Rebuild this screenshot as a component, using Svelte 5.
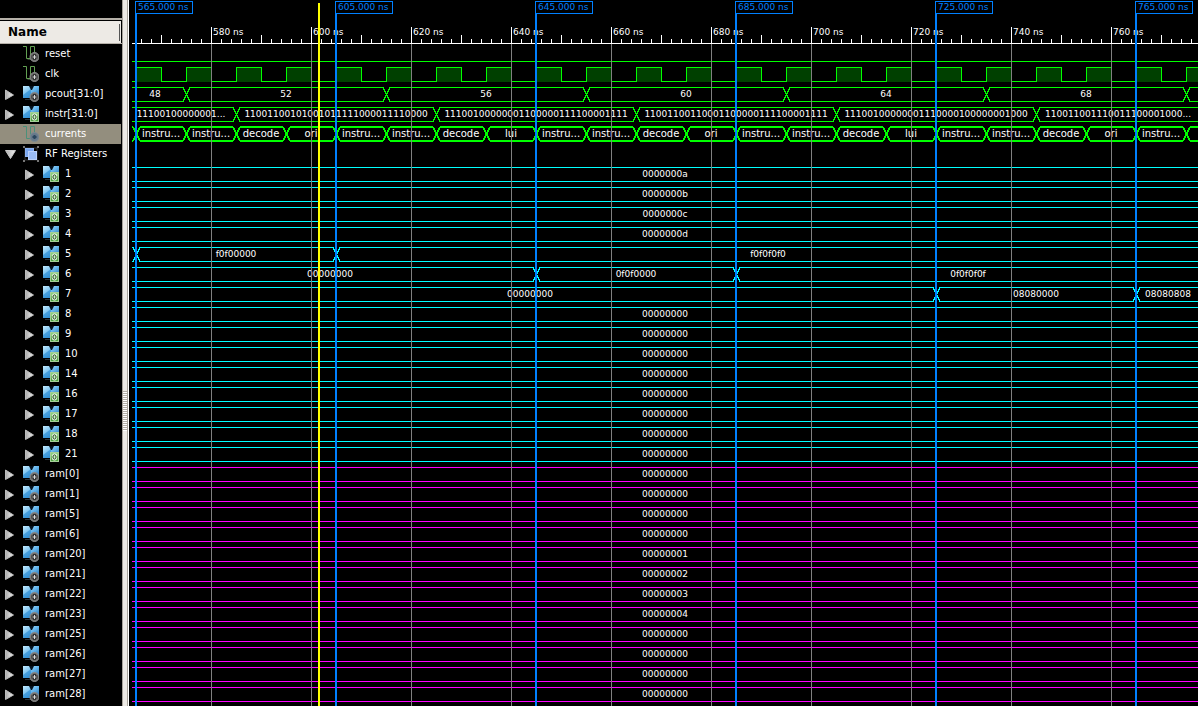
<script>
  const T0 = 565;
  const T_END = 780;
  const PX_PER_NS = 5;
  const ROW = 20;
  const HEAD = 44;
  const FAR = 4000;
  const x = (t) => (t - T0) * PX_PER_NS + 4;

  const GREEN = '#00ff00';
  const CYAN = '#00ffff';
  const MAGENTA = '#ff00ff';

  const states = [];
  for (let t = 565, i = 0; t < 775; t += 10, i++) {
    const step = i % 4;
    const last = Math.floor(i / 4) % 2 === 0 ? 'ori' : 'lui';
    states.push({ x: x(t + 5), label: step < 2 ? 'instru...' : step === 2 ? 'decode' : last });
  }

  const bus = (label, cuts, values, extra = {}) => ({
    label, kind: 'bus', icon: 'bus', badge: 'out', color: GREEN, expandable: true,
    cuts, values: values.map(([vx, text]) => ({ x: vx, label: text })), ...extra
  });

  const registers = [1, 2, 3, 4, 5, 6, 7, 8, 9, 10, 14, 16, 17, 18, 21];
  const constants = { 1: '0000000a', 2: '0000000b', 3: '0000000c', 4: '0000000d' };
  const changing = {
    5: [[565, 605], [[104, 'f0f00000'], [636, 'f0f0f0f0']]],
    6: [[645, 685], [[198, '00000000'], [504, '0f0f0000'], [836, '0f0f0f0f']]],
    7: [[725, 765], [[398, '00000000'], [904, '08080000'], [1036, '08080808']]]
  };
  const ram = [
    [0, 0], [1, 0], [5, 0], [6, 0], [20, 1], [21, 2],
    [22, 3], [23, 4], [25, 0], [26, 0], [27, 0], [28, 0]
  ];

  const top = [
    { label: 'reset', kind: 'low', icon: 'wire', badge: 'in', color: GREEN },
    { label: 'clk', kind: 'clock', icon: 'wire', badge: 'in', color: GREEN },
    bus('pcout[31:0]', [575, 615, 655, 695, 735, 775],
      [[23, '48'], [154, '52'], [354, '56'], [554, '60'], [754, '64'], [954, '68']],
      { badge: 'in' }),
    bus('instr[31:0]', [585, 625, 665, 705, 745], [
      [49, '11100100000001...'],
      [204, '11001100101001011111000011110000'],
      [404, '11100100000001100000111100001111'],
      [604, '11001100110001100000111100001111'],
      [804, '11100100000001110000100000001000'],
      [986, '110011001110011100001000...']
    ]),
    {
      label: 'currents', kind: 'bus', icon: 'wire', badge: 'in', color: GREEN, selected: true,
      thick: true, cuts: Array.from({ length: 22 }, (_, i) => 565 + i * 10), values: states
    }
  ];
  const regRows = registers.map((r) =>
    changing[r]
      ? bus(String(r), changing[r][0], changing[r][1], { color: CYAN, level: 1 })
      : bus(String(r), [], [], { color: CYAN, level: 1, constant: constants[r] ?? '00000000' })
  );
  const ramRows = ram.map(([n, v]) =>
    bus(`ram[${n}]`, [], [], { color: MAGENTA, badge: 'in', constant: String(v).padStart(8, '0') })
  );

  let open = $state(true);
  let rows = $derived([
    ...top,
    { label: 'RF Registers', kind: 'group', icon: 'group', expandable: true, group: true },
    ...(open ? regRows : []),
    ...ramRows
  ]);

  const cursors = [565, 605, 645, 685, 725, 765];
  const ticks = [];
  for (let t = 566; t < T_END; t += 2) ticks.push(t);
  const grid = ticks.filter((t) => t % 20 === 0);
  const tickTop = (t) => (t % 20 === 0 ? 27 : t % 10 === 0 ? 35 : 39);

  function busPath(row, y) {
    const h = row.thick ? 0 : 0.5;
    const a = y + 3 + h;
    const b = y + 17 + h;
    const s = 3.5;
    let d = '';
    let from = 0;
    for (const t of row.cuts) {
      const c = x(t) + 0.5;
      if (c - s > from) d += `M${from} ${a}H${c - s}M${from} ${b}H${c - s}`;
      d += `M${c - s} ${a}L${c + s} ${b}M${c - s} ${b}L${c + s} ${a}`;
      from = c + s;
    }
    return d + `M${from} ${a}H${FAR}M${from} ${b}H${FAR}`;
  }

  function clockPath(y) {
    let d = `M0 ${y + 17.5}`;
    for (let t = 565; t < T_END; t += 10) {
      d += `H${x(t) + 0.5}V${y + 3.5}H${x(t + 5) + 0.5}V${y + 17.5}`;
    }
    return d + `H${FAR}`;
  }
</script>

{#snippet badge(kind)}
  {#if kind === 'out'}
    <rect x="7.5" y="6.5" width="8" height="9" fill="#4fa53f" stroke="#a5cf9a" />
    <rect x="8" y="7" width="7" height="3" fill="#8ccf7d" />
    <ellipse cx="11.5" cy="11" rx="1.6" ry="2.2" fill="#8ccf7d" stroke="#fff" stroke-width="2.400" />
    <ellipse cx="11.5" cy="11" rx="1.6" ry="2.2" fill="#cdeec4" stroke="#1b4a14" />
  {:else}
    <circle cx="11.5" cy="11" r="4.5" fill="#6c6c6c" stroke="#8c8c8c" />
    <path d="M11.5 8v6M8.500 11h6" stroke="#333" stroke-width="3" />
    <path d="M11.5 9v4M9.5 11h4" stroke="#d8d8d8" />
  {/if}
{/snippet}

{#snippet icon(row)}
  <svg class="icon" width="16" height="16" viewBox="0 0 16 16" aria-hidden="true">
    {#if row.icon === 'wire'}
      <path d="M0 .5H3.5V12.5H7.5V.5H11.5V8" fill="none" stroke={row.selected ? '#4b907a' : '#62a052'} />
      {#if row.selected}
        <circle cx="11.5" cy="11" r="4.5" fill="#66798a" stroke="#7b8a94" />
        <path d="M11.5 9v4M9.5 11h4" stroke="#29465e" stroke-width="2" />
      {:else}
        <path d="M4.5 13.5H8.5" stroke="#30402c" />
        {@render badge(row.badge)}
      {/if}
    {:else if row.icon === 'bus'}
      <rect width="16" height="12" fill="url(#sky)" />
      <path d="M0 9L8 3V12H0Z" fill="#2689d2" opacity=".6" />
      <path d="M6 0H11L9 4H8Z" fill="#04101c" />
      <path d="M2 13.500H8" stroke="#26313a" />
      {@render badge(row.badge)}
    {:else}
      <path d="M2 2H14V14H2Z" fill="none" stroke="#333" />
      <path d="M0 0h2v2H0zM14 0h2v2h-2zM0 14h2v2H0zM14 14h2v2h-2z" fill="#777" />
      <rect x="2.5" y="2.5" width="8" height="8" fill="#79a5ee" stroke="#8db4f4" />
      <rect x="5.5" y="5.5" width="8" height="8" fill="#9abcf6" stroke="#b9d1fc" />
    {/if}
  </svg>
{/snippet}

<svg class="defs" width="0" height="0" aria-hidden="true">
  <defs>
    <linearGradient id="sky" x1="0" y1="0" x2="1" y2="1">
      <stop offset="0" stop-color="#c4ecff" />
      <stop offset=".5" stop-color="#67b7ed" />
      <stop offset="1" stop-color="#1566ae" />
    </linearGradient>
    <linearGradient id="steel" x1="0" y1="0" x2="1" y2="0">
      <stop offset="0" stop-color="#aaa" />
      <stop offset="1" stop-color="#f4f4f4" />
    </linearGradient>
  </defs>
</svg>

<main class="viewer">
  <aside class="names">
    <header><h1>Name</h1></header>
    <ul>
      {#each rows as row (row.label)}
        <li class:nested={row.level} class:selected={row.selected}>
          {#if row.expandable}
            <button
              type="button"
              aria-label="Expand {row.label}"
              onclick={() => { if (row.group) open = !open; }}
            >
              <svg width="12" height="12" viewBox="0 0 12 12" aria-hidden="true">
                {#if row.group && open}
                  <path d="M.5 2.5H10.5L5.500 10.5Z" fill="url(#steel)" stroke="#ccc" />
                {:else}
                  <path d="M.5 2L8.5 7L.5 11.5Z" fill="url(#steel)" stroke="#bbb" />
                {/if}
              </svg>
            </button>
          {:else}
            <span class="gap"></span>
          {/if}
          {@render icon(row)}
          <span class="label">{row.label}</span>
        </li>
      {/each}
    </ul>
  </aside>

  <div class="splitter"><div class="grip"></div></div>

  <section class="waves">
    <svg width="100%" height={HEAD + rows.length * ROW + 2} role="img" aria-label="Waveforms">
      <g shape-rendering="crispEdges" stroke="#fff">
        <path d="M0 43.5H{FAR}" />
        {#each ticks as t}<path d="M{x(t) + 0.5} {tickTop(t)}V43" />{/each}
      </g>
      {#each grid as t}<text x={x(t) + 2} y="35">{t} ns</text>{/each}

      {#each rows as row, i (row.label)}
        {@const y = HEAD + i * ROW}
        {#if row.kind === 'low'}
          <path class="trace" d="M0 {y + 17.5}H{FAR}" stroke={row.color} />
        {:else if row.kind === 'clock'}
          <path class="trace clock" d={clockPath(y)} stroke={row.color} />
        {:else if row.kind === 'bus'}
          <path class="trace" class:thick={row.thick} d={busPath(row, y)} stroke={row.color} />
          {#each row.values as v}
            <text class="mid" class:state={row.thick} x={v.x} y={y + 13}>{v.label}</text>
          {/each}
          {#if row.constant}
            <text class="mid" x="50%" y={y + 13}>{row.constant}</text>
          {/if}
        {/if}
      {/each}

      <g shape-rendering="crispEdges">
        {#each grid as t}<path d="M{x(t) + 0.5} 44V{FAR}" stroke="#808080" />{/each}
        <rect x="186" y="3" width="2" height={FAR} fill="#ffff00" />
        {#each cursors as t}
          <rect x={x(t) - 1} y="13" width="2" height={FAR} fill="#0080ff" />
          <rect x={x(t) - 0.5} y="1.5" width="57" height="12" fill="#000" stroke="#0080ff" />
        {/each}
      </g>
      {#each cursors as t}<text class="cursor" x={x(t) + 2} y="10">{t}.000 ns</text>{/each}
    </svg>
  </section>
</main>

<style>
  :global(body) {
    margin: 0;
    background: #000;
  }
  .defs {
    position: absolute;
  }
  .viewer {
    display: flex;
    min-height: 100vh;
    overflow: hidden;
    background: #000;
    color: #fff;
    font: 10px/20px "DejaVu Sans", sans-serif;
  }
  .names {
    flex: 0 0 122px;
    box-sizing: border-box;
    padding-top: 18px;
  }
  header {
    box-sizing: border-box;
    height: 26px;
    padding-right: 1px;
    border-top: 2px solid #b5b0a8;
    border-bottom: 1px solid #b5b0a8;
  }
  h1 {
    position: relative;
    margin: 1px 0 0;
    padding-left: 8px;
    background: #edeae5;
    color: #000;
    font-size: 12px;
    font-weight: bold;
    line-height: 22px;
  }
  h1::after {
    content: "";
    position: absolute;
    top: 3px;
    right: 1px;
    width: 1px;
    height: 17px;
    background: #555;
  }
  ul {
    margin: 0;
    padding: 0;
    list-style: none;
  }
  li {
    display: flex;
    align-items: center;
    height: 20px;
    margin-right: 1px;
    padding-left: 5px;
  }
  li.nested {
    padding-left: 25px;
  }
  li.selected {
    background: #938e7e;
  }
  button,
  .gap {
    flex: 0 0 12px;
    height: 12px;
    margin-right: 6px;
    padding: 0;
    border: 0;
    background: none;
  }
  button svg,
  .icon {
    display: block;
  }
  .icon {
    flex: none;
  }
  .label {
    margin-left: 6px;
    white-space: nowrap;
  }
  .splitter {
    display: flex;
    flex: 0 0 4px;
    align-items: center;
    padding-top: 116px;
    border-left: 1px solid #a9a49c;
    border-right: 1px solid #a9a49c;
    background: #edeae5;
    box-shadow: 1px 0 #fff;
  }
  .grip {
    width: 100%;
    height: 40px;
    background: repeating-linear-gradient(#b5b0a8 0 1px, #fff 1px 2px);
  }
  .waves {
    flex: 1;
    min-width: 0;
    margin-left: 4px;
  }
  .waves svg {
    display: block;
    overflow: hidden;
  }
  .waves text {
    fill: #fff;
    font-size: 9px;
  }
  .waves .mid {
    text-anchor: middle;
  }
  .waves .state {
    font-size: 10px;
  }
  .waves .cursor {
    fill: #0080ff;
  }
  .trace {
    fill: none;
    stroke-width: 1px;
    shape-rendering: crispEdges;
  }
  .thick {
    stroke-width: 2px;
  }
  .clock {
    fill: #004000;
  }
</style>
